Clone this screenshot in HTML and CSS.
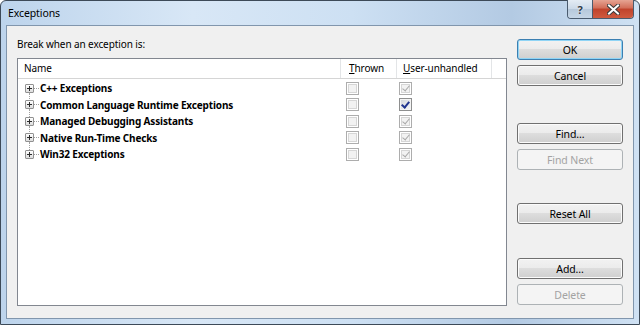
FILE: index.html
```html
<!DOCTYPE html>
<html lang="en">
<head>
  <meta charset="UTF-8">
  <title>Exceptions</title>
  <link rel="stylesheet" href="styles.css">
</head>
<body>
  <div class="window">
    <!-- Title bar -->
    <div class="titlebar">
      <span class="title">Exceptions</span>
      <div class="caption-buttons">
        <div class="cap help">?</div>
        <div class="cap close">
          <svg width="13" height="11" viewBox="0 0 13 11">
            <path d="M2 1.5 L11 9.5 M11 1.5 L2 9.5" stroke="#3b3b3b" stroke-width="4" stroke-linecap="square"/>
            <path d="M2 1.5 L11 9.5 M11 1.5 L2 9.5" stroke="#fff" stroke-width="2" stroke-linecap="square"/>
          </svg>
        </div>
      </div>
    </div>

    <!-- Dialog body -->
    <div class="client">
      <div class="main">
        <div class="prompt">Break when an exception is:</div>
        <div class="list">
          <div class="list-header">
            <div class="col">Name</div>
            <div class="col"><u>T</u>hrown</div>
            <div class="col"><u>U</u>ser-unhandled</div>
            <div class="col"></div>
          </div>
          <div class="rows">
            <div class="row">
              <div class="name"><span class="twisty first"></span>C++ Exceptions</div>
              <div class="cell thrown"><span class="check"></span></div>
              <div class="cell user"><span class="check on disabled"></span></div>
            </div>
            <div class="row">
              <div class="name"><span class="twisty"></span>Common Language Runtime Exceptions</div>
              <div class="cell thrown"><span class="check"></span></div>
              <div class="cell user"><span class="check on enabled"></span></div>
            </div>
            <div class="row">
              <div class="name"><span class="twisty"></span>Managed Debugging Assistants</div>
              <div class="cell thrown"><span class="check"></span></div>
              <div class="cell user"><span class="check on disabled"></span></div>
            </div>
            <div class="row">
              <div class="name"><span class="twisty"></span>Native Run-Time Checks</div>
              <div class="cell thrown"><span class="check"></span></div>
              <div class="cell user"><span class="check on disabled"></span></div>
            </div>
            <div class="row">
              <div class="name"><span class="twisty last"></span>Win32 Exceptions</div>
              <div class="cell thrown"><span class="check"></span></div>
              <div class="cell user"><span class="check on disabled"></span></div>
            </div>
          </div>
        </div>
      </div>

      <!-- Buttons column -->
      <div class="buttons">
        <button class="btn default">OK</button>
        <button class="btn">Cancel</button>
        <button class="btn group-find">Find...</button>
        <button class="btn" disabled>Find Next</button>
        <button class="btn group-reset">Reset All</button>
        <button class="btn group-add">Add...</button>
        <button class="btn" disabled>Delete</button>
      </div>
    </div>
  </div>
</body>
</html>
```

FILE: styles.css
```css
/* Global */
body {
  margin: 0;
  background: #ffffff;
  font-family: "Noto Sans", "Open Sans", sans-serif;
  font-size: 10px;
  letter-spacing: -0.1px;
  color: #000;
}

/* Window frame */
.window {
  width: 640px;
  height: 325px;
  box-sizing: border-box;
  border: 1px solid #3d4a58;
  border-radius: 6px 6px 0 0;
  background: linear-gradient(to right, #bdd4ec 0%, #d8e7f6 30%, #cde0f3 55%, #b3cae3 80%, #cfe1f3 100%);
  padding: 0 5px 5px 5px;
  display: flex;
  flex-direction: column;
}

.titlebar {
  height: 24px;
  display: flex;
  justify-content: space-between;
  align-items: flex-start;
}

.title {
  margin-top: 5px;
  margin-left: 2px;
  font-size: 10.5px;
  color: #000;
}

/* Caption buttons */
.caption-buttons {
  display: flex;
  margin-top: -1px;
  border: 1px solid #4a5b6e;
  border-top: none;
  border-radius: 0 0 4px 4px;
  overflow: hidden;
}

.cap {
  height: 18px;
  display: flex;
  align-items: center;
  justify-content: center;
}

.cap.help {
  width: 24px;
  border-right: 1px solid #4a5b6e;
  background: linear-gradient(#e4ecf4, #cbd9e8 50%, #b6c8db 51%, #c6d6e6);
  font-weight: bold;
  font-size: 11px;
  color: #2f3b48;
  text-shadow: 0 0 2px #fff;
}

.cap.close {
  width: 40px;
  background: linear-gradient(#e6a493, #d26d58 45%, #c0432c 50%, #cf5a3f);
}

/* Client area */
.client {
  flex: 1;
  display: flex;
  border: 1px solid #8196ad;
  background: #f0f0f0;
  padding: 0 9px 0 10px;
}

.main {
  display: flex;
  flex-direction: column;
  width: 490px;
}

.prompt {
  margin-top: 11px;
  height: 21px;
}

/* Exception list */
.list {
  height: 248px;
  box-sizing: border-box;
  border: 1px solid #828790;
  background: #fff;
}

.list-header {
  display: grid;
  grid-template-columns: 323px 56px 95px 1fr;
  height: 19px;
  border-bottom: 1px solid #d5d5d5;
}

.list-header .col {
  padding-left: 6px;
  line-height: 18px;
  border-right: 1px solid #e3e5e7;
}

.list-header .col:nth-child(2) {
  padding-left: 8px;
}

.list-header .col:last-child {
  border-right: none;
}

.rows {
  padding-top: 1px;
}

.row {
  display: grid;
  grid-template-columns: 323px 56px 95px;
  height: 16.5px;
  align-items: center;
}

.name {
  display: flex;
  align-items: center;
  padding-left: 7px;
  font-weight: bold;
  letter-spacing: -0.15px;
}

/* Tree expander box with dotted connectors */
.twisty {
  position: relative;
  width: 9px;
  height: 9px;
  box-sizing: border-box;
  margin-right: 6px;
  border: 1px solid #919191;
  border-radius: 1px;
  background:
    linear-gradient(#2b2b2b, #2b2b2b) center / 5px 1px no-repeat,
    linear-gradient(#2b2b2b, #2b2b2b) center / 1px 5px no-repeat,
    linear-gradient(#ffffff, #dcdcdc);
}

.twisty::after {
  content: "";
  position: absolute;
  left: 8px;
  top: 3px;
  width: 5px;
  border-top: 1px dotted #a0a0a0;
}

.twisty::before {
  content: "";
  position: absolute;
  left: 3px;
  top: 8px;
  height: 8px;
  border-left: 1px dotted #a0a0a0;
}

.twisty.last::before {
  display: none;
}

.cell {
  display: flex;
  align-items: center;
}

.cell.thrown {
  padding-left: 5px;
}

.cell.user {
  padding-left: 2px;
}

/* Checkboxes */
.check {
  width: 13px;
  height: 13px;
  box-sizing: border-box;
  border: 1px solid #adadad;
  background: #f2f2f2;
  box-shadow: inset 0 0 0 1px #fff, inset 0 0 0 2px #d6d6d6;
  display: flex;
  align-items: center;
  justify-content: center;
}

.check.on::before {
  content: "";
  width: 3px;
  height: 6px;
  margin-top: -2px;
  border-right: 1.5px solid #a8a8a8;
  border-bottom: 1.5px solid #a8a8a8;
  transform: rotate(40deg);
}

.check.enabled {
  border-color: #8e8f8f;
  background: linear-gradient(135deg, #d2d5db, #f6f6f6);
  box-shadow: inset 0 0 0 1px #f4f4f4;
}

.check.enabled::before {
  border-color: #21358f;
  border-width: 0 2px 2px 0;
}

/* Buttons */
.buttons {
  display: flex;
  flex-direction: column;
  margin-left: 10px;
  padding-top: 13px;
  width: 106px;
}

.btn {
  height: 21px;
  margin-bottom: 5px;
  box-sizing: border-box;
  border: 1px solid #707070;
  border-radius: 3px;
  background: linear-gradient(#f2f2f2 0%, #ebebeb 49%, #dddddd 50%, #cfcfcf 100%);
  box-shadow: inset 0 0 0 1px #fbfbfb;
  font-family: inherit;
  font-size: 10.5px;
  letter-spacing: -0.1px;
  color: #000;
  padding: 0;
}

.btn.default {
  border-color: #3c7fb1;
  box-shadow: inset 0 0 0 1px #8fd4f5;
}

.btn:disabled {
  border-color: #adb2b5;
  background: #f4f4f4;
  box-shadow: none;
  color: #a3a3a3;
}

.btn.group-find {
  margin-top: 32px;
}

.btn.group-reset {
  margin-top: 28px;
}

.btn.group-add {
  margin-top: 29px;
}
```
